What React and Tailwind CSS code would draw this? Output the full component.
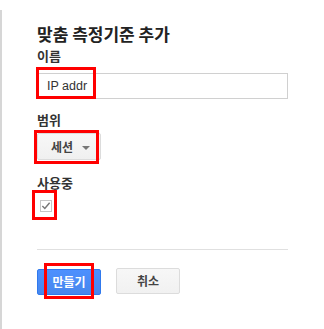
const Mark = ({ className }) => (
  <div className={`pointer-events-none absolute border-[3px] border-[#f00] ${className}`} />
);

const App = () => {
  return (
    <div
      className="min-h-[329px] bg-white pt-[10px]"
      style={{ fontFamily: '"Noto Sans CJK KR", "Liberation Sans", sans-serif' }}
    >
      <div className="flex min-h-[319px] flex-col border-l-2 border-[#d6d6d6] pl-[35px] pt-[12px] w-[288px] box-content">
        <h1 className="text-[17px] font-bold leading-[24px] text-[#222]">맞춤 측정기준 추가</h1>

        <label className="mt-[1px] text-[13px] font-bold leading-[18px] text-[#333]">이름</label>
        <div className="relative mt-[6px] h-[26px] w-[251px]">
          <input
            className="h-full w-full border border-[#d0d0d0] px-[9px] text-[12.5px] text-[#333] outline-none"
            style={{ fontFamily: '"Liberation Sans", Arial, sans-serif' }}
            type="text"
            value="IP addr"
            onChange={(e) => e}
          />
          <Mark className="-left-[1px] -top-[4px] h-[32px] w-[60px]" />
        </div>

        <label className="mt-[14px] text-[13px] font-bold leading-[18px] text-[#333]">범위</label>
        <div className="relative mt-[4px] h-[27px] w-[64px]">
          <button className="flex h-full w-full items-center rounded-[2px] border border-[#dcdcdc] bg-gradient-to-b from-[#f7f7f7] to-[#f0f0f0] pl-[13px] pr-[10px] text-[12px] font-bold text-[#444]">
            <span>세션</span>
            <span className="ml-auto mt-[3px] h-0 w-0 border-x-[4px] border-t-[4px] border-x-transparent border-t-[#777]" />
          </button>
          <Mark className="-left-[3px] -top-[3px] h-[34px] w-[65px]" />
        </div>

        <label className="mt-[14px] text-[13px] font-bold leading-[18px] text-[#333]">사용중</label>
        <div className="relative ml-[3px] mt-[8px] h-[12px] w-[12px]">
          <div className="flex h-full w-full items-center justify-center border border-[#c6c6c6] bg-white">
            <svg width="10" height="10" viewBox="0 0 11 11">
              <path d="M1.5 5.5 L4.2 8.2 L9.5 2" fill="none" stroke="#777" strokeWidth="1.6" />
            </svg>
          </div>
          <Mark className="-left-[8px] -top-[10px] h-[30px] w-[25px]" />
        </div>

        <div className="mt-[37px] h-px w-[251px] bg-[#e0e0e0]" />

        <div className="mt-[18px] flex gap-[15px]">
          <div className="relative h-[26px] w-[64px]">
            <button className="h-full w-full rounded-[2px] border border-[#3079ed] bg-gradient-to-b from-[#4d90fe] to-[#4787ed] text-[12px] font-bold text-white">
              만들기
            </button>
            <Mark className="left-[7px] -top-[5px] h-[36px] w-[50px]" />
          </div>
          <button className="h-[26px] w-[64px] rounded-[2px] border border-[#dcdcdc] bg-gradient-to-b from-[#f7f7f7] to-[#f1f1f1] text-[12px] font-bold text-[#444]">
            취소
          </button>
        </div>
      </div>
    </div>
  );
};

export default App;
